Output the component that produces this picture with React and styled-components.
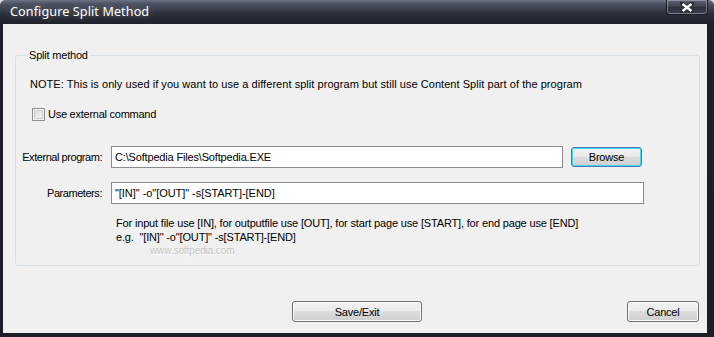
import React from "react";
import styled, { createGlobalStyle } from "styled-components";

const Global = createGlobalStyle`
  html, body { margin: 0; padding: 0; background: #d8d8d8; }
  body { font-family: "Liberation Sans", Arial, sans-serif; }
`;

const Window = styled.div`
  width: 714px;
  height: 337px;
  box-sizing: border-box;
  display: flex;
  flex-direction: column;
  background: linear-gradient(#4a5060 0px, #2a2e3a 12px, #1d2029 24px, #1b1e27 100%);
  border-radius: 6px 6px 0 0;
  overflow: hidden;
`;

const TitleBar = styled.div`
  height: 24px;
  flex: none;
  display: flex;
  align-items: flex-start;
  justify-content: space-between;
  padding-left: 10px;
  box-sizing: border-box;
  background: linear-gradient(#6d7484 0px, #4a5060 4px, #2b2f3b 14px, #1e2129 24px);
`;

const Title = styled.div`
  font-family: "Noto Sans", "Open Sans", sans-serif;
  font-size: 12.6px;
  line-height: 24px;
  color: #ffffff;
  text-shadow: 0 0 6px rgba(255, 255, 255, 0.35);
  letter-spacing: 0.1px;
`;

const CloseButton = styled.div`
  width: 42px;
  height: 15px;
  margin-right: 6px;
  box-sizing: border-box;
  border: 1px solid #1a1c22;
  border-top: none;
  border-radius: 0 0 4px 4px;
  box-shadow: inset 0 0 0 1px rgba(200, 205, 215, 0.45);
  background: linear-gradient(#5e6472, #3a3f4b 50%, #2c303a 51%, #3b404c);
  display: flex;
  align-items: center;
  justify-content: center;
`;

const Body = styled.div`
  flex: 1;
  margin: 0 7px 4px 3px;
  background: #f0f0f0;
  display: flex;
  flex-direction: column;
  padding: 25px 0 11px 0;
  box-sizing: border-box;
  font-size: 11px;
  letter-spacing: -0.45px;
  color: #000;
`;

const Group = styled.fieldset`
  margin: 0 7px 0 12px;
  padding: 15px 6px 9px 6px;
  border: 1px solid #d5dfe5;
  border-radius: 3px;
  display: flex;
  flex-direction: column;
  min-width: 0;
`;

const Legend = styled.legend`
  padding: 0 2px;
  margin-left: 5px;
  font-size: 11px;
  line-height: 13px;
  letter-spacing: -0.2px;
`;

const Note = styled.div`
  margin: 1px 0 0 8px;
  line-height: 13px;
  letter-spacing: 0.05px;
  white-space: nowrap;
`;

const CheckRow = styled.label`
  display: flex;
  align-items: center;
  gap: 3px;
  margin: 17px 0 0 10px;
  line-height: 13px;
  letter-spacing: -0.25px;
`;

const Box = styled.span`
  width: 13px;
  height: 13px;
  box-sizing: border-box;
  border: 1px solid #8f8f8f;
  background: linear-gradient(135deg, #dcdcdc, #f6f6f6);
  box-shadow: inset 0 0 0 1px #f4f4f4, inset 0 0 0 2px #d0d0d0;
`;

const Form = styled.div`
  display: grid;
  grid-template-columns: 80px 452px 80px;
  column-gap: 9px;
  row-gap: 14px;
  margin-top: 25px;
  align-items: center;
`;

const Label = styled.div`
  text-align: right;
  white-space: nowrap;
`;

const Input = styled.div`
  height: 22px;
  box-sizing: border-box;
  border: 1px solid #8a8c90;
  background: #fff;
  padding: 0 3px;
  line-height: 20px;
  white-space: nowrap;
  letter-spacing: ${(p) => (p.$wide ? "-0.05px" : "-0.17px")};
  grid-column: ${(p) => (p.$wide ? "2 / span 2" : "2")};
  width: ${(p) => (p.$wide ? "533px" : "auto")};
`;

const Button = styled.div`
  height: ${(p) => p.$h || 21}px;
  width: ${(p) => p.$w}px;
  box-sizing: border-box;
  border: 1px solid ${(p) => (p.$focus ? "#3c7fb1" : "#707070")};
  border-radius: 3px;
  background: linear-gradient(#f2f2f2 0%, #ebebeb 45%, #dddddd 50%, #cfcfcf 100%);
  box-shadow: inset 0 0 0 1px ${(p) => (p.$focus ? "#48d2f8" : "#fcfcfc")};
  display: flex;
  align-items: center;
  justify-content: center;
  letter-spacing: -0.2px;
  justify-self: ${(p) => p.$justify || "start"};
  margin-left: ${(p) => p.$ml || 0}px;
`;

const Help = styled.div`
  margin: 12px 0 0 94px;
  line-height: 14px;
  letter-spacing: -0.16px;
  white-space: nowrap;
`;

const Url = styled.div`
  margin: 1px 0 0 128px;
  font-size: 10px;
  letter-spacing: -0.1px;
  line-height: 11px;
  color: #c4c4c4;
  text-shadow: 0 1px 0 #fff;
`;

const Footer = styled.div`
  margin-top: auto;
  display: grid;
  grid-template-columns: 1fr auto 1fr;
  align-items: center;
  padding: 0 8px 0 12px;
`;

export default function App() {
  return (
    <>
      <Global />
      <Window>
        <TitleBar>
          <Title>Configure Split Method</Title>
          <CloseButton>
            <svg width="14" height="11" viewBox="0 0 14 11">
              <path d="M2 1.5 L12 9.5 M12 1.5 L2 9.5" stroke="#2a2d35" strokeWidth="4.4" strokeLinecap="square" />
              <path d="M2.5 2 L11.5 9 M11.5 2 L2.5 9" stroke="#ffffff" strokeWidth="2.4" />
            </svg>
          </CloseButton>
        </TitleBar>
        <Body>
          <Group>
            <Legend>Split method</Legend>
            <Note>
              NOTE: This is only used if you want to use a different split program but still use Content Split part of the program
            </Note>
            <CheckRow>
              <Box />
              Use external command
            </CheckRow>
            <Form>
              <Label>External program:</Label>
              <Input>C:\Softpedia Files\Softpedia.EXE</Input>
              <Button $w={71} $h={20} $focus $ml={-1}>Browse</Button>
              <Label>Parameters:</Label>
              <Input $wide>"[IN]" -o"[OUT]" -s[START]-[END]</Input>
            </Form>
            <Help>
              <div>For input file use [IN], for outputfile use [OUT], for start page use [START], for end page use [END]</div>
              <div>e.g.&nbsp; "[IN]" -o"[OUT]" -s[START]-[END]</div>
            </Help>
            <Url>www.softpedia.com</Url>
          </Group>
          <Footer>
            <span />
            <Button $w={130}>Save/Exit</Button>
            <Button $w={72} $justify="end">Cancel</Button>
          </Footer>
        </Body>
      </Window>
    </>
  );
}
